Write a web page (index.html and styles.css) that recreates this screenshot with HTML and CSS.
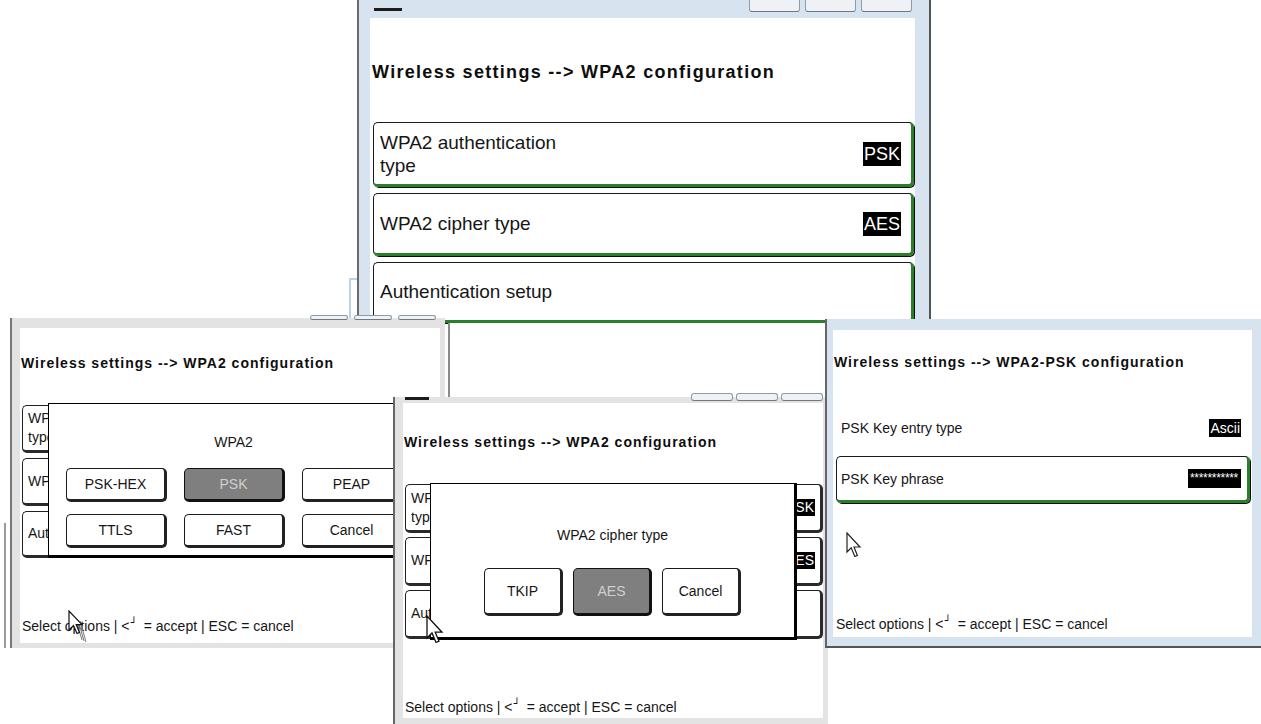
FILE: index.html
```html
<!DOCTYPE html>
<html>
<head>
<meta http-equiv="Content-Type" content="text/html; charset=utf-8"/>
<title>WPA2 configuration screens</title>
<link rel="stylesheet" href="styles.css">
</head>
<body>
<div class="desk">

  <!-- top screen, larger scale -->
  <section class="shot shot-a">
    <div class="topbar">
      <span class="stub"></span>
      <span class="tabs"><i></i><i></i><i></i></span>
    </div>
    <div class="screen">
      <h1 class="title">Wireless settings --&gt; WPA2 configuration</h1>
      <div class="rows">
        <div class="row r1"><span class="label">WPA2 authentication<br>type</span><span class="val">PSK</span></div>
        <div class="row r2"><span class="label">WPA2 cipher type</span><span class="val">AES</span></div>
        <div class="row r3"><span class="label">Authentication setup</span></div>
      </div>
    </div>
  </section>

  <span class="bracket"></span>
  <div class="scrap"></div>
  <span class="edge"></span>

  <!-- authentication type popup -->
  <section class="shot shot-b">
    <div class="topbar">
      <span class="stub"></span>
      <span class="tabs"><i></i><i></i><i></i></span>
    </div>
    <div class="screen">
      <h1 class="title">Wireless settings --&gt; WPA2 configuration</h1>
      <div class="rows">
        <div class="row r1"><span class="label">WPA2 authentication<br>type</span></div>
        <div class="row r2"><span class="label">WPA2 cipher type</span></div>
        <div class="row r3"><span class="label">Authentication setup</span></div>
      </div>
      <div class="dialog">
        <div class="dlg-title">WPA2</div>
        <div class="choices">
          <span class="btn">PSK-HEX</span>
          <span class="btn on">PSK</span>
          <span class="btn">PEAP</span>
          <span class="btn">TTLS</span>
          <span class="btn">FAST</span>
          <span class="btn">Cancel</span>
        </div>
      </div>
      <div class="status">Select options | &lt;<span class="ret">┘</span> = accept | ESC = cancel</div>
    </div>
  </section>

  <!-- cipher type popup -->
  <section class="shot shot-c">
    <div class="topbar">
      <span class="stub"></span>
      <span class="tabs"><i></i><i></i><i></i></span>
    </div>
    <div class="screen">
      <h1 class="title">Wireless settings --&gt; WPA2 configuration</h1>
      <div class="rows">
        <div class="row r1"><span class="label">WPA2 authentication<br>type</span><span class="val">PSK</span></div>
        <div class="row r2"><span class="label">WPA2 cipher type</span><span class="val">AES</span></div>
        <div class="row r3"><span class="label">Authentication setup</span></div>
      </div>
      <div class="dialog">
        <div class="dlg-title">WPA2 cipher type</div>
        <div class="choices">
          <span class="btn">TKIP</span>
          <span class="btn on">AES</span>
          <span class="btn">Cancel</span>
        </div>
      </div>
      <div class="status">Select options | &lt;<span class="ret">┘</span> = accept | ESC = cancel</div>
    </div>
  </section>

  <!-- PSK configuration -->
  <section class="shot shot-d">
    <div class="topbar"></div>
    <div class="screen">
      <h1 class="title">Wireless settings --&gt; WPA2-PSK configuration</h1>
      <div class="rows">
        <div class="row plain r1"><span class="label">PSK Key entry type</span><span class="val">Ascii</span></div>
        <div class="row r2"><span class="label">PSK Key phrase</span><span class="val stars">***********</span></div>
      </div>
      <div class="status">Select options | &lt;<span class="ret">┘</span> = accept | ESC = cancel</div>
    </div>
  </section>

  <svg class="cursor cur-b" width="22" height="34" viewBox="0 0 22 34">
    <path d="M8 10 L14 30 M10 10 L16 31 M12 11 L18 32" stroke="#777" stroke-width="1" fill="none"/>
    <path d="M1 1 V20 L5.5 15.5 L9 23.5 L11.5 22.4 L8.2 14.6 H14 Z" fill="#fff" stroke="#111" stroke-width="1.2"/>
  </svg>
  <svg class="cursor cur-c" width="18" height="30" viewBox="0 0 18 30">
    <path d="M1 1 V23 L6 18 L10 27.5 L13 26.2 L9.2 17.2 H16 Z" fill="#fff" stroke="#111" stroke-width="1.3"/>
  </svg>
  <svg class="cursor cur-d" width="16" height="27" viewBox="0 0 16 27">
    <path d="M1 1 V20 L5.2 15.8 L8.8 24.5 L11.4 23.4 L8 15 H14 Z" fill="#fff" stroke="#222" stroke-width="1.2"/>
  </svg>

</div>
</body>
</html>
```

FILE: styles.css
```css
body {
  margin: 0;
  background: #fff;
  font-family: "Liberation Sans", Arial, sans-serif;
  color: #161616;
}

.desk {
  position: relative;
  width: 1261px;
  height: 724px;
  overflow: hidden;
}

/* each screenshot sits on the canvas like a window */
.shot {
  position: absolute;
  box-sizing: border-box;
  display: flex;
  flex-direction: column;
}

.topbar {
  display: flex;
  justify-content: space-between;
  align-items: flex-start;
  flex: none;
}

.stub {
  display: block;
  height: 3px;
  background: #1c1c1c;
}

.tabs {
  display: flex;
}

.tabs i {
  display: block;
  box-sizing: border-box;
  border: 1px solid #8f9aa5;
  border-bottom-color: #6f7780;
  border-radius: 3px;
  background: #eef2f6;
}

.screen {
  flex: 1;
  position: relative;
  display: flex;
  flex-direction: column;
  background: #fff;
  min-height: 0;
}

.title {
  margin: 0;
  font-weight: bold;
  white-space: nowrap;
  color: #0e0e0e;
}

.rows {
  display: flex;
  flex-direction: column;
}

.row {
  display: flex;
  align-items: center;
  justify-content: space-between;
  box-sizing: border-box;
  border: 1px solid #1a1a1a;
  border-radius: 5px;
  white-space: nowrap;
  overflow: hidden;
}

.val {
  background: #000;
  color: #fff;
  white-space: nowrap;
}

.status {
  margin-top: auto;
  white-space: nowrap;
}

.ret {
  font-family: "DejaVu Sans", sans-serif;
  font-size: 0.75em;
  vertical-align: 0.5em;
  line-height: 0;
  margin: 0 3px 0 1px;
}

/* ---- top screen ---- */
.shot-a {
  left: 357px;
  top: 0;
  width: 574px;
  height: 332px;
  background: #d7e3ef;
  border-left: 2px solid #6a6a6a;
  border-right: 2px solid #555;
  padding: 0 14px 0 11px;
  z-index: 1;
}

.shot-a .topbar {
  height: 18px;
}

.shot-a .stub {
  width: 28px;
  margin: 8px 0 0 4px;
}

.shot-a .tabs {
  gap: 5px;
  margin: -4px 3px 0 0;
}

.shot-a .tabs i {
  width: 51px;
  height: 16px;
}

.shot-a .title {
  font-size: 18px;
  letter-spacing: 1.3px;
  line-height: 22px;
  padding: 43px 0 0 2px;
  margin-bottom: 39px;
}

.shot-a .rows {
  gap: 6px;
  padding-left: 3px;
}

.shot-a .row {
  font-size: 19px;
  border-right: 3px solid #2b7f2b;
  border-bottom: 3px solid #2b7f2b;
  box-shadow: 1px 1px 0 #0d0d0d;
  padding: 0 10px 0 6px;
  margin-right: 1px;
}

.shot-a .label {
  line-height: 23px;
}

.shot-a .val {
  font-size: 18px;
  line-height: 24px;
  padding: 0 1px;
}

.shot-a .r1 { height: 65px; }
.shot-a .r2 { height: 63px; }
.shot-a .r3 { height: 61px; }

.bracket {
  position: absolute;
  left: 349px;
  top: 278px;
  width: 6px;
  height: 42px;
  border: 2px solid #b9d3e8;
  border-right: none;
  border-bottom: none;
}

.scrap {
  position: absolute;
  left: 448px;
  top: 323px;
  width: 378px;
  height: 74px;
  box-sizing: border-box;
  background: #fff;
  border-left: 2px solid #8a8a8a;
  border-right: 1px solid #333;
  z-index: 2;
}

.edge {
  position: absolute;
  left: 4px;
  top: 523px;
  width: 2px;
  height: 125px;
  background: #9a9a9a;
}

/* ---- smaller screens ---- */
.shot-b .title,
.shot-c .title,
.shot-d .title {
  font-size: 14px;
  letter-spacing: 1px;
  line-height: 18px;
}

.shot-b .row,
.shot-c .row {
  font-size: 14px;
  border-color: #202020;
  border-right: 3px solid #2a2a2a;
  border-bottom: 3px solid #2a2a2a;
  padding: 0 5px 0 5px;
}

/* only the part left of the popup shows */
.shot-b .label,
.shot-c .label {
  line-height: 19px;
  width: 20px;
  overflow: hidden;
}

.status {
  font-size: 14px;
  line-height: 18px;
}

.dialog {
  position: absolute;
  box-sizing: border-box;
  background: #fff;
  border: 1px solid #000;
  border-right-width: 3px;
  border-bottom-width: 3px;
  display: flex;
  flex-direction: column;
  font-size: 14px;
}

.dlg-title {
  text-align: center;
  line-height: 18px;
}

.btn {
  box-sizing: border-box;
  display: flex;
  align-items: center;
  justify-content: center;
  border: 1px solid #1a1a1a;
  border-right: 3px solid #222;
  border-bottom: 3px solid #222;
  border-radius: 5px;
  background: #fff;
  font-size: 14px;
}

.btn.on {
  background: #7f7f7f;
  color: #cfcfcf;
  border-color: #111;
}

/* ---- authentication type popup ---- */
.shot-b {
  left: 10px;
  top: 318px;
  width: 435px;
  height: 330px;
  background: #e3e3e3;
  border-left: 2px solid #777;
  padding: 0 5px 5px 8px;
  z-index: 3;
}

.shot-b .topbar {
  height: 10px;
}

.shot-b .stub {
  width: 0;
}

.shot-b .tabs {
  gap: 6px;
  margin: -3px 4px 0 0;
}

.shot-b .tabs i {
  width: 38px;
  height: 5px;
}

.shot-b .title {
  padding: 26px 0 0 1px;
  margin-bottom: 33px;
}

.shot-b .rows {
  gap: 5px;
  padding: 0 3px 0 2px;
}

.shot-b .r1 { height: 48px; }
.shot-b .r2 { height: 48px; }
.shot-b .r3 { height: 47px; }

.shot-b .dialog {
  left: 28px;
  top: 75px;
  width: 373px;
  height: 155px;
}

.shot-b .dlg-title {
  padding-top: 29px;
}

.shot-b .choices {
  display: grid;
  grid-template-columns: repeat(3, 101px);
  grid-auto-rows: 34px;
  column-gap: 17px;
  row-gap: 12px;
  margin-top: 17px;
  padding-left: 17px;
}

.shot-b .status {
  padding: 0 0 8px 2px;
}

/* ---- cipher type popup ---- */
.shot-c {
  left: 393px;
  top: 397px;
  width: 435px;
  height: 327px;
  background: #e3e3e3;
  border-left: 2px solid #666;
  padding: 0 5px 6px 8px;
  z-index: 4;
}

.shot-c .topbar {
  height: 6px;
}

.shot-c .stub {
  width: 24px;
  margin: 0 0 0 2px;
}

.shot-c .tabs {
  gap: 3px;
  margin-top: -4px;
}

.shot-c .tabs i {
  width: 42px;
  height: 8px;
}

.shot-c .title {
  padding: 30px 0 0 1px;
  margin-bottom: 33px;
}

.shot-c .rows {
  gap: 4px;
  padding-left: 2px;
}

.shot-c .row {
  height: 49px;
}

.shot-c .val {
  line-height: 17px;
  padding: 0 1px;
}

.shot-c .dialog {
  left: 27px;
  top: 80px;
  width: 367px;
  height: 157px;
}

.shot-c .dlg-title {
  padding-top: 42px;
}

.shot-c .choices {
  display: flex;
  justify-content: center;
  gap: 10px;
  margin-top: 24px;
}

.shot-c .btn {
  width: 79px;
  height: 48px;
}

.shot-c .status {
  padding: 0 0 2px 2px;
}

/* ---- PSK configuration ---- */
.shot-d {
  left: 825px;
  top: 319px;
  width: 436px;
  height: 329px;
  background: #d7e3ef;
  border-left: 2px solid #666;
  border-bottom: 2px solid #555;
  padding: 0 9px 9px 6px;
  z-index: 5;
}

.shot-d .topbar {
  height: 11px;
}

.shot-d .title {
  padding: 23px 0 0 1px;
  margin-bottom: 39px;
}

.shot-d .rows {
  gap: 11px;
  padding: 0 2px 0 3px;
}

.shot-d .row {
  font-size: 14px;
  border-right: 3px solid #2b7f2b;
  border-bottom: 3px solid #2b7f2b;
  box-shadow: 1px 1px 0 #0d0d0d;
  padding: 0 6px 0 4px;
  height: 47px;
}

.shot-d .row.plain {
  border: none;
  box-shadow: none;
  height: 35px;
  padding: 0 9px 0 5px;
}

.shot-d .val {
  line-height: 18px;
  padding: 0 1px;
}

.shot-d .val.stars {
  font-size: 12px;
  line-height: 19px;
  padding: 0 3px 0 2px;
  letter-spacing: -0.3px;
}

.shot-d .status {
  padding: 0 0 4px 3px;
}

.cursor {
  position: absolute;
  z-index: 6;
}

.cur-b { left: 68px; top: 610px; }
.cur-c { left: 426px; top: 615px; }
.cur-d { left: 846px; top: 532px; }
```
